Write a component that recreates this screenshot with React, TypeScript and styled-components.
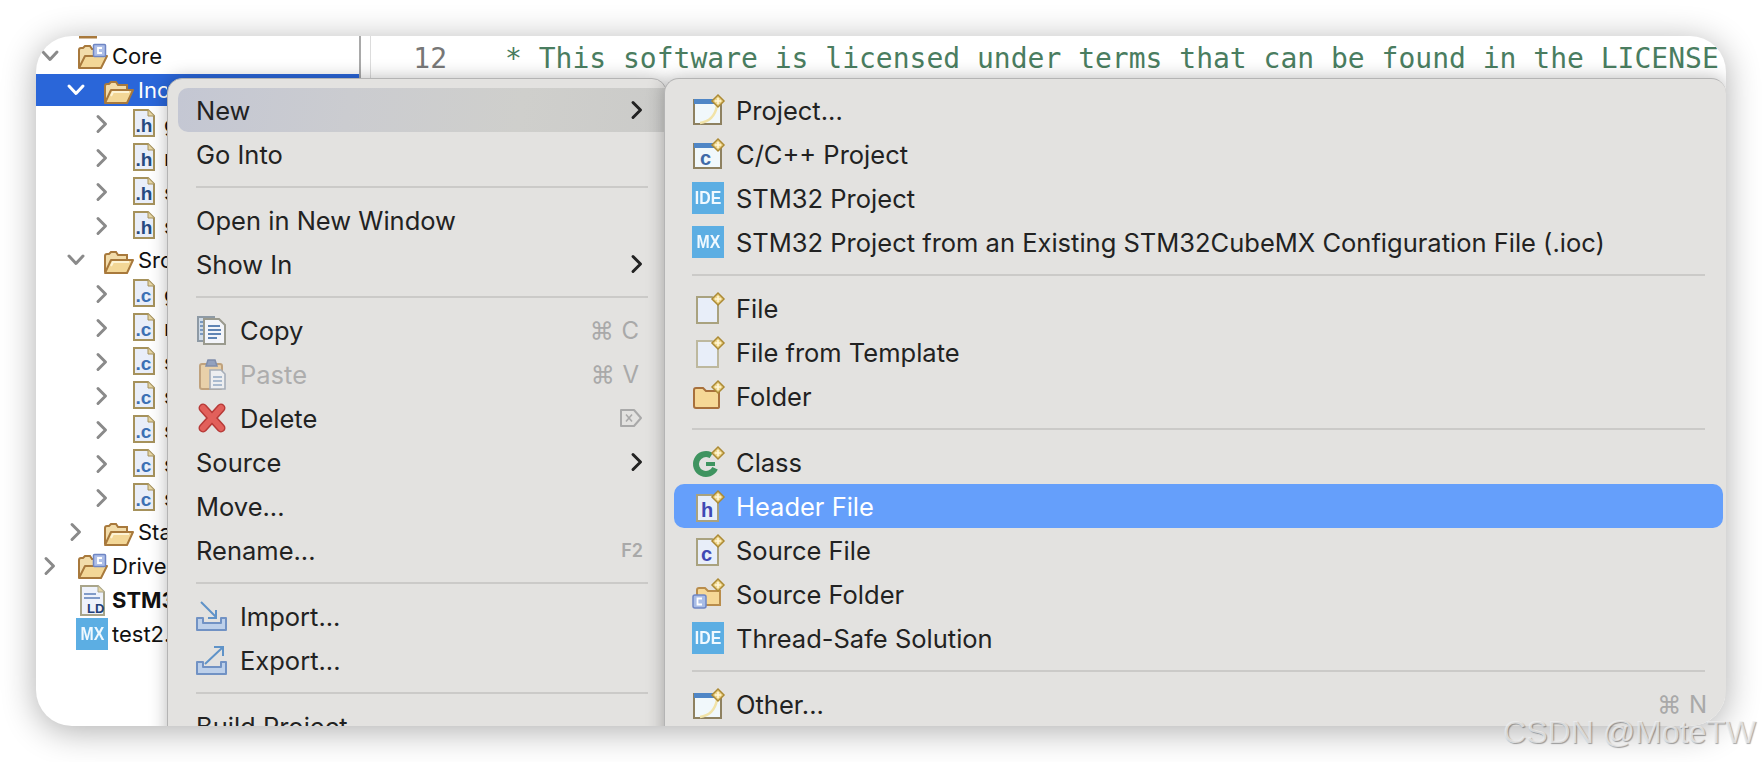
import React from "react";
import styled, { createGlobalStyle } from "styled-components";

const Global = createGlobalStyle`
  html, body { margin: 0; padding: 0; background: #fff; }
  body { width: 1762px; height: 762px; overflow: hidden; font-family: Inter, "Liberation Sans", sans-serif; }
`;

const Page = styled.div`
  position: relative;
  box-sizing: border-box;
  width: 1762px;
  height: 762px;
  padding: 36px;
  background: #fff;
`;
const Win = styled.div`
  position: relative;
  display: flex;
  width: 1690px;
  height: 690px;
  border-radius: 36px;
  overflow: hidden;
  background: #fff;
  box-shadow: 0 5px 34px rgba(0, 0, 0, 0.32);
`;
const Tree = styled.div`
  flex: none;
  box-sizing: border-box;
  width: 325px;
  height: 690px;
  overflow: hidden;
  border-right: 2px solid #a9a9a9;
`;
const TreeList = styled.div`
  margin-top: -31px;
`;
const Row = styled.div<{ $depth: number; $selected?: boolean; $bold?: boolean }>`
  display: flex;
  align-items: center;
  box-sizing: border-box;
  height: 34px;
  padding: 0 192px 0 ${(p) => 4 + p.$depth * 26}px;
  border-block: 1px solid transparent;
  background: ${(p) => (p.$selected ? "#2a66d9" : "transparent")};
  background-clip: padding-box;
  color: ${(p) => (p.$selected ? "#fff" : "#111")};
  font-size: 22px;
  font-weight: ${(p) => (p.$bold ? 700 : 400)};
  white-space: nowrap;
`;
const ChevSlot = styled.span`
  flex: none;
  display: flex;
  align-items: center;
  justify-content: center;
  width: 20px;
  height: 20px;
  margin-right: 16px;
`;
const Slot = styled.span`
  flex: none;
  display: flex;
  align-items: center;
  justify-content: center;
  width: 32px;
  height: 32px;
`;
const TreeLabel = styled.span`
  flex: 1;
  min-width: 0;
  overflow: hidden;
  margin-left: 4px;
`;
const Gutter = styled.div`
  flex: none;
  box-sizing: border-box;
  width: 10px;
  border-right: 1px solid #dcdcdc;
`;
const Editor = styled.div`
  flex: 1;
  display: flex;
  font-family: "DejaVu Sans Mono", "Liberation Mono", monospace;
  font-size: 28px;
  line-height: 34px;
  white-space: pre;
  padding-top: 6px;
`;
const LineNo = styled.span`
  flex: none;
  box-sizing: border-box;
  width: 76px;
  text-align: right;
  color: #777;
`;
const Code = styled.span`
  margin-left: 58px;
  color: #4a7d60;
`;
const Menu = styled.div<{ $left: number; $width: number }>`
  position: absolute;
  top: 42px;
  left: ${(p) => p.$left}px;
  box-sizing: border-box;
  width: ${(p) => p.$width}px;
  height: 700px;
  border: 1px solid #b4b4b4;
  border-radius: 15px 15px 0 0;
  background: #e3e2e0;
  box-shadow: 0 0 18px rgba(0, 0, 0, 0.28);
  color: #222;
  font-size: 25.5px;
`;
const MainMenu = styled(Menu)`
  padding: 9px 0 0 10px;
`;
const SubMenu = styled(Menu)`
  padding: 9px 3px 0 9px;
  border-right: 0;
`;
const Item = styled.div<{ $active?: "main" | "sub"; $sub?: boolean }>`
  display: flex;
  align-items: center;
  box-sizing: border-box;
  height: 44px;
  padding: 0 ${(p) => (p.$sub ? 16 : 19)}px 0 18px;
  border-radius: 10px;
  white-space: nowrap;
  ${(p) =>
    p.$active === "main"
      ? "background: linear-gradient(100deg, #c4c7d3 0%, #cbccd0 35%, #cfcfcc 70%, #cbcbc9 100%); border-radius: 10px 0 0 10px;"
      : ""}
  ${(p) => (p.$active === "sub" ? "background: #659ffb; color: #fff;" : "")}
`;
const ItemText = styled.span<{ $icon?: boolean; $off?: boolean }>`
  flex: 1;
  margin-left: ${(p) => (p.$icon ? 12 : 0)}px;
  color: ${(p) => (p.$off ? "#adadad" : "inherit")};
`;
const Shortcut = styled.span<{ $small?: boolean; $sub?: boolean }>`
  color: #a9a9a9;
  font-size: ${(p) => (p.$small ? 18 : 24)}px;
  font-weight: ${(p) => (p.$small ? 600 : 400)};
  word-spacing: 1px;
  margin-right: ${(p) => (p.$sub ? 0 : p.$small ? 4 : 8)}px;
`;
const Sep = styled.div`
  display: flex;
  align-items: center;
  height: 22px;
  margin: 0 18px;
  &::before {
    content: "";
    flex: 1;
    height: 2px;
    background: #cbcac8;
  }
`;
const Badge = styled.span`
  display: flex;
  align-items: center;
  justify-content: center;
  width: 32px;
  height: 32px;
  background: #5caee3;
`;
const BadgeText = styled.span`
  display: inline-block;
  color: #f0f9ff;
  font: 700 18px "Liberation Sans", sans-serif;
  transform: scaleX(0.88);
  filter: blur(0.5px);
`;
const Watermark = styled.div`
  position: absolute;
  right: 6px;
  bottom: 12px;
  font: 400 32px "Liberation Sans", Arial, sans-serif;
  line-height: 36px;
  color: rgba(240, 240, 240, 0.75);
  text-shadow: 1px 1px 1px rgba(0, 0, 0, 0.35);
  white-space: nowrap;
`;
const Glyph = styled.svg`
  display: block;
  overflow: visible;
`;
const DelGlyph = styled(Glyph)`
  margin-right: 4px;
`;

const Chev = ({ dir, color, w = 3 }: { dir: "down" | "right"; color: string; w?: number }) => (
  <Glyph width="20" height="20" viewBox="0 0 20 20">
    <path
      d={dir === "down" ? "M3 6 L10 13.5 L17 6" : "M6 2.5 L13.5 10 L6 17.5"}
      fill="none"
      stroke={color}
      strokeWidth={w}
      strokeLinecap="round"
      strokeLinejoin="round"
    />
  </Glyph>
);

const I = ({ children, off }: { children: React.ReactNode; off?: boolean }) => (
  <Glyph width="32" height="32" viewBox="0 0 32 32" opacity={off ? 0.6 : 1}>
    {children}
  </Glyph>
);
const Sparkle = () => (
  <>
    <path d="M26 1 L32 7 L26 13 L20 7 Z" fill="#ecd48a" stroke="#ac8a34" strokeWidth="1.5" />
    <path d="M26 4 V10 M23 7 H29" stroke="#fff6d8" strokeWidth="1.6" />
  </>
);
const FolderOpen = () => (
  <I>
    <path d="M3 28 V12 Q3 10 5 10 H7 L9 8 H14 L16 11 H25 V16" fill="#f2dcaa" stroke="#a8793c" strokeWidth="2" />
    <path d="M3 29 L9 16 H31 L25 29 Z" fill="#f3d797" stroke="#a8793c" strokeWidth="2" strokeLinejoin="round" />
    <path d="M9 22 L11 18 H27" fill="none" stroke="#fdf3d4" strokeWidth="2" />
  </I>
);
const FolderSrc = () => (
  <I>
    <path d="M3 28 V10 Q3 8 5 8 H7 L9 6 H14 L16 9 H25 V16" fill="#f2dcaa" stroke="#a8793c" strokeWidth="2" />
    <path d="M3 28 L9 16 H31 L25 28 Z" fill="#f3d797" stroke="#a8793c" strokeWidth="2" strokeLinejoin="round" />
    <rect x="17.5" y="4.5" width="12" height="12" rx="1" fill="#aebfe8" stroke="#6f86c4" strokeWidth="1.5" />
    <path d="M26 8 H22 V13 H26" fill="none" stroke="#fff" strokeWidth="1.8" />
  </I>
);
const ProjectTop = () => (
  <I>
    <rect x="3" y="30" width="18" height="2.5" fill="#a8793c" />
  </I>
);
const FileLetter = ({ t, c }: { t: string; c: string }) => (
  <I>
    <path d="M6 2 H20 L26 8 V28 H6 Z" fill="#e9eef9" stroke="#a6925c" strokeWidth="2" />
    <path d="M20 2 V8 H26" fill="#e6d6a4" stroke="#a6925c" strokeWidth="1" />
    <text x="7.5" y="24" fontFamily="Liberation Sans, sans-serif" fontWeight="700" fontSize="19" fill={c}>
      {t}
    </text>
  </I>
);
const LdFile = () => (
  <I>
    <path d="M5 2 H22 L28 8 V31 H5 Z" fill="#eef2fb" stroke="#a9a58a" strokeWidth="2" />
    <path d="M22 2 V8 H28" fill="#e6d6a4" stroke="#a9a58a" strokeWidth="1" />
    <path d="M8 10 H20 M8 14 H24" stroke="#5c7fb8" strokeWidth="1.5" />
    <text x="11" y="29" fontFamily="Liberation Sans, sans-serif" fontWeight="700" fontSize="13" fill="#1f3f78">
      LD
    </text>
  </I>
);
const CopyIcon = () => (
  <I>
    <path d="M2 3 H18 V27 H2 Z" fill="#cfdbe8" stroke="#8e9aa5" strokeWidth="2" />
    <path d="M4 8 H8 M4 12 H8 M4 16 H8 M4 20 H8" stroke="#5f84b4" strokeWidth="1.5" />
    <path d="M8 5 H23 L29 11 V30 H8 Z" fill="#f3f5fa" stroke="#9a9a8e" strokeWidth="2" />
    <path d="M12 12 H24 M12 16 H25 M12 20 H25 M12 24 H21" stroke="#5f84b4" strokeWidth="1.8" />
  </I>
);
const PasteIcon = () => (
  <I off>
    <rect x="4" y="6" width="22" height="25" rx="2" fill="#ecc585" stroke="#a9793c" strokeWidth="2" />
    <path d="M10 8 L12 2 H19 L21 8 Z" fill="#5d76a8" stroke="#3e5688" strokeWidth="1.5" />
    <path d="M14 12 H25 L29 16 V31 H14 Z" fill="#f4f6fb" stroke="#7f8da0" strokeWidth="1.6" />
    <path d="M17 19 H26 M17 23 H26 M17 27 H26" stroke="#5f84b4" strokeWidth="1.6" />
  </I>
);
const DeleteIcon = () => (
  <I>
    <path d="M7 6 L25 26 M25 6 L7 26" stroke="#b73a38" strokeWidth="9" strokeLinecap="round" />
    <path d="M7 6 L25 26 M25 6 L7 26" stroke="#e2605b" strokeWidth="6" strokeLinecap="round" />
  </I>
);
const Tray = () => (
  <path d="M1 18 H7 V23 H25 V18 H30 V30 H1 Z" fill="#bdd0ea" stroke="#7192c4" strokeWidth="2" strokeLinejoin="round" />
);
const ImportIcon = () => (
  <I>
    <Tray />
    <path d="M5 2 L20 17 M20 10 V18 H12" fill="none" stroke="#5f93c8" strokeWidth="2" />
  </I>
);
const ExportIcon = () => (
  <I>
    <Tray />
    <path d="M9 20 L26 4 M18 3 H27 V12" fill="none" stroke="#5f93c8" strokeWidth="2" />
  </I>
);
const ProjectIcon = ({ c }: { c?: boolean }) => (
  <I>
    <rect x="2" y="6" width="27" height="24" fill="#f1f8fb" stroke="#8e8160" strokeWidth="2" />
    <rect x="2" y="5" width="25" height="5" fill="#4f86c6" />
    {c ? (
      <text x="8" y="27" fontFamily="Liberation Sans, sans-serif" fontWeight="700" fontSize="20" fill="#3f6aa8">
        c
      </text>
    ) : (
      <path d="M8 29 Q22 27 25 12" fill="none" stroke="#f1e3a8" strokeWidth="2.5" />
    )}
    <Sparkle />
  </I>
);
const NewFile = ({ pale }: { pale?: boolean }) => (
  <I>
    <path d="M5 5 H20 L26 11 V31 H5 Z" fill="#e8eef9" stroke={pale ? "#bdb89e" : "#a9a27f"} strokeWidth="2" />
    <Sparkle />
  </I>
);
const NewFolder = () => (
  <I>
    <path d="M2 10 Q2 8 4 8 H11 L14 11 H27 V27 Q27 28 25 28 H4 Q2 28 2 26 Z" fill="#f6d896" stroke="#a8703c" strokeWidth="2" />
    <Sparkle />
  </I>
);
const ClassIcon = () => (
  <I>
    <circle cx="14" cy="18" r="10" fill="none" stroke="#3f9460" strokeWidth="6" strokeDasharray="48 15" transform="rotate(25 14 18)" />
    <rect x="14" y="16" width="9" height="4" fill="#3f9460" />
    <Sparkle />
  </I>
);
const NewSource = ({ t }: { t: string }) => (
  <I>
    <path d="M5 5 H20 L26 11 V31 H5 Z" fill="#e8eef9" stroke="#a9a27f" strokeWidth="2" />
    <text x="9" y="27" fontFamily="Liberation Sans, sans-serif" fontWeight="700" fontSize="20" fill="#3f48b4">
      {t}
    </text>
    <Sparkle />
  </I>
);
const SourceFolder = () => (
  <I>
    <path d="M5 12 Q5 10 7 10 H13 L16 13 H28 V27 H5 Z" fill="#f6d896" stroke="#b98d4c" strokeWidth="2" />
    <rect x="1" y="17" width="13" height="13" rx="2" fill="#a9bde6" stroke="#6f86c4" strokeWidth="1.5" />
    <path d="M10 20.5 H5.5 V26.5 H10" fill="none" stroke="#fff" strokeWidth="1.8" />
    <Sparkle />
  </I>
);
const Mx = () => (
  <Badge>
    <BadgeText>MX</BadgeText>
  </Badge>
);
const Ide = () => (
  <Badge>
    <BadgeText>IDE</BadgeText>
  </Badge>
);

type TreeRow = {
  depth: number;
  chev?: "down" | "right";
  icon: React.ReactNode;
  label: string;
  selected?: boolean;
  bold?: boolean;
};
const hFile = <FileLetter t=".h" c="#274a80" />;
const cFile = <FileLetter t=".c" c="#3d70b4" />;
const treeRows: TreeRow[] = [
  { depth: 0, icon: <ProjectTop />, label: "" },
  { depth: 0, chev: "down", icon: <FolderSrc />, label: "Core" },
  { depth: 1, chev: "down", icon: <FolderOpen />, label: "Inc", selected: true },
  { depth: 2, chev: "right", icon: hFile, label: "gpio.h" },
  { depth: 2, chev: "right", icon: hFile, label: "main.h" },
  { depth: 2, chev: "right", icon: hFile, label: "stm32f4xx_hal_conf.h" },
  { depth: 2, chev: "right", icon: hFile, label: "stm32f4xx_it.h" },
  { depth: 1, chev: "down", icon: <FolderOpen />, label: "Src" },
  { depth: 2, chev: "right", icon: cFile, label: "gpio.c" },
  { depth: 2, chev: "right", icon: cFile, label: "main.c" },
  { depth: 2, chev: "right", icon: cFile, label: "stm32f4xx_hal_msp.c" },
  { depth: 2, chev: "right", icon: cFile, label: "stm32f4xx_it.c" },
  { depth: 2, chev: "right", icon: cFile, label: "syscalls.c" },
  { depth: 2, chev: "right", icon: cFile, label: "sysmem.c" },
  { depth: 2, chev: "right", icon: cFile, label: "system_stm32f4xx.c" },
  { depth: 1, chev: "right", icon: <FolderOpen />, label: "Startup" },
  { depth: 0, chev: "right", icon: <FolderSrc />, label: "Drivers" },
  { depth: 0, icon: <LdFile />, label: "STM32F407VETX_FLASH.ld", bold: true },
  { depth: 0, icon: <Mx />, label: "test2.ioc" },
];

type MenuEntry =
  | "sep"
  | {
      label: string;
      icon?: React.ReactNode;
      more?: boolean;
      off?: boolean;
      key?: string;
      small?: boolean;
      del?: boolean;
      active?: boolean;
    };

const mainItems: MenuEntry[] = [
  { label: "New", more: true, active: true },
  { label: "Go Into" },
  "sep",
  { label: "Open in New Window" },
  { label: "Show In", more: true },
  "sep",
  { label: "Copy", icon: <CopyIcon />, key: "⌘ C" },
  { label: "Paste", icon: <PasteIcon />, key: "⌘ V", off: true },
  { label: "Delete", icon: <DeleteIcon />, del: true },
  { label: "Source", more: true },
  { label: "Move..." },
  { label: "Rename...", key: "F2", small: true },
  "sep",
  { label: "Import...", icon: <ImportIcon /> },
  { label: "Export...", icon: <ExportIcon /> },
  "sep",
  { label: "Build Project" },
];
const subItems: MenuEntry[] = [
  { label: "Project...", icon: <ProjectIcon /> },
  { label: "C/C++ Project", icon: <ProjectIcon c /> },
  { label: "STM32 Project", icon: <Ide /> },
  { label: "STM32 Project from an Existing STM32CubeMX Configuration File (.ioc)", icon: <Mx /> },
  "sep",
  { label: "File", icon: <NewFile /> },
  { label: "File from Template", icon: <NewFile pale /> },
  { label: "Folder", icon: <NewFolder /> },
  "sep",
  { label: "Class", icon: <ClassIcon /> },
  { label: "Header File", icon: <NewSource t="h" />, active: true },
  { label: "Source File", icon: <NewSource t="c" /> },
  { label: "Source Folder", icon: <SourceFolder /> },
  { label: "Thread-Safe Solution", icon: <Ide /> },
  "sep",
  { label: "Other...", icon: <ProjectIcon />, key: "⌘ N" },
];

const DelKey = () => (
  <DelGlyph width="24" height="20" viewBox="0 0 24 20">
    <path d="M2 2 H15 L22 10 L15 18 H2 Z" fill="none" stroke="#a9a9a9" strokeWidth="2" strokeLinejoin="round" />
    <path d="M7 6.5 L13 13.5 M13 6.5 L7 13.5" stroke="#a9a9a9" strokeWidth="1.6" />
  </DelGlyph>
);

const MenuList = ({ items, sub }: { items: MenuEntry[]; sub?: boolean }) => (
  <>
    {items.map((it, i) =>
      it === "sep" ? (
        <Sep key={i} />
      ) : (
        <Item key={i} $sub={sub} $active={it.active ? (sub ? "sub" : "main") : undefined}>
          {it.icon && <Slot>{it.icon}</Slot>}
          <ItemText $icon={!!it.icon} $off={it.off}>
            {it.label}
          </ItemText>
          {it.key && (
            <Shortcut $small={it.small} $sub={sub}>
              {it.key}
            </Shortcut>
          )}
          {it.del && <DelKey />}
          {it.more && <Chev dir="right" color="#222" />}
        </Item>
      )
    )}
  </>
);

export default function App() {
  return (
    <Page>
      <Global />
      <Win>
        <Tree>
          <TreeList>
            {treeRows.map((r, i) => (
              <Row key={i} $depth={r.depth} $selected={r.selected} $bold={r.bold}>
                <ChevSlot>{r.chev && <Chev dir={r.chev} color={r.selected ? "#fff" : "#8a8a8a"} />}</ChevSlot>
                <Slot>{r.icon}</Slot>
                <TreeLabel>{r.label}</TreeLabel>
              </Row>
            ))}
          </TreeList>
        </Tree>
        <Gutter />
        <Editor>
          <LineNo>12</LineNo>
          <Code>* This software is licensed under terms that can be found in the LICENSE</Code>
        </Editor>
        <MainMenu $left={131} $width={500}>
          <MenuList items={mainItems} />
        </MainMenu>
        <SubMenu $left={628} $width={1062}>
          <MenuList items={subItems} sub />
        </SubMenu>
      </Win>
      <Watermark>CSDN @MoteTW</Watermark>
    </Page>
  );
}
